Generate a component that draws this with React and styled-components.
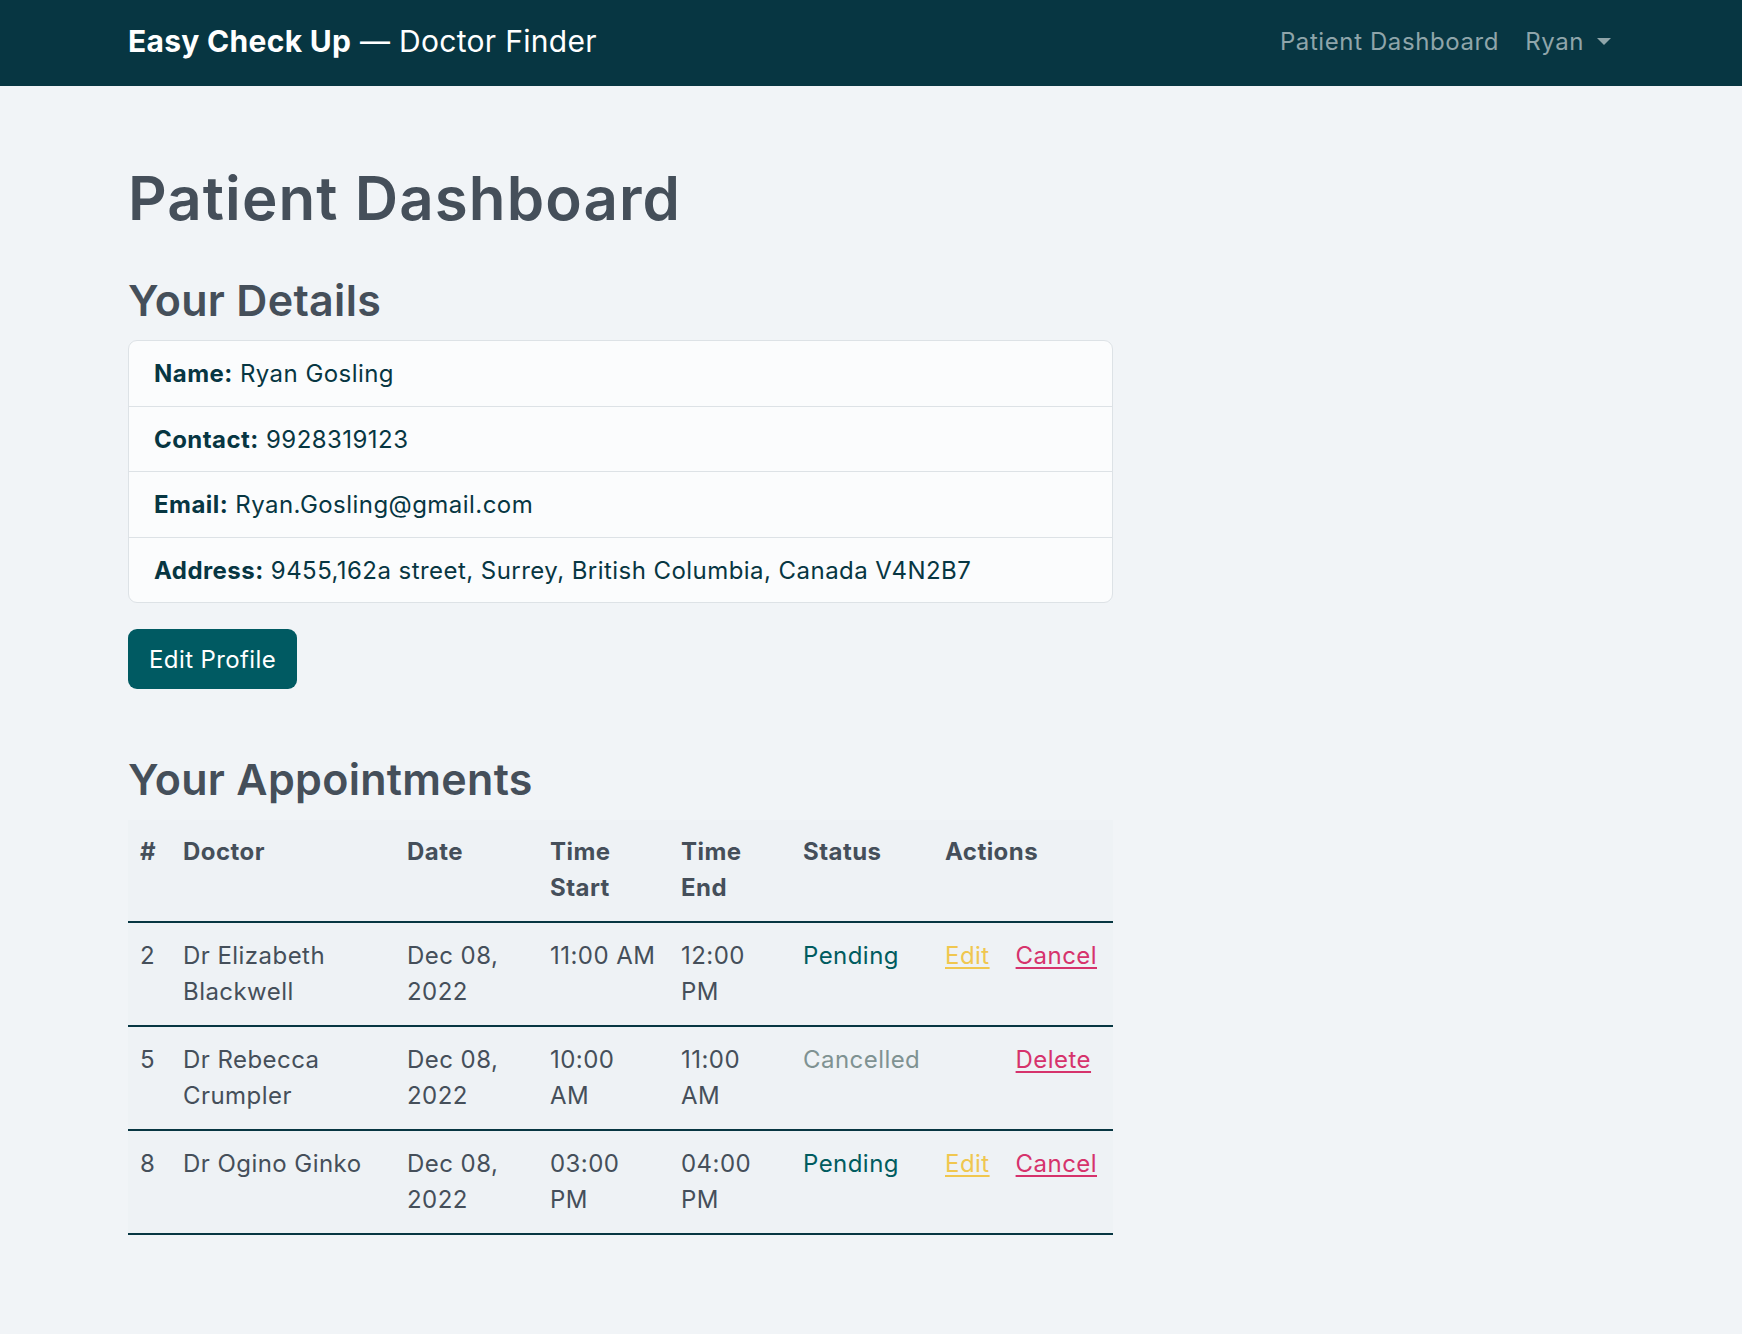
import React from "react";
import styled, { createGlobalStyle } from "styled-components";

const GlobalStyle = createGlobalStyle`
  * { box-sizing: border-box; }
  body {
    margin: 0;
    background: #f1f4f7;
    font-family: Inter, "Noto Sans", "Liberation Sans", sans-serif;
    color: #454f5a;
    font-size: 24px;
    line-height: 1.5;
    letter-spacing: 0.45px;
  }
`;

const Navbar = styled.nav`
  height: 86px;
  background: #073642;
  display: flex;
  align-items: center;
  justify-content: space-between;
  padding: 0 131px 3px 128px;
`;

const Brand = styled.div`
  color: #fff;
  font-size: 30px;
  font-weight: 400;
  letter-spacing: 0.3px;

  strong {
    font-weight: 700;
  }
`;

const NavLinks = styled.div`
  display: flex;
  align-items: center;
  gap: 26px;
`;

const NavLink = styled.a`
  color: #8fa5aa;
  font-size: 24px;
  letter-spacing: 0.6px;
  text-decoration: none;

  ${({ $dropdown }) =>
    $dropdown &&
    `
    &::after {
      content: "";
      display: inline-block;
      margin-left: 13px;
      vertical-align: 5px;
      border-top: 7px solid #8fa5aa;
      border-left: 7px solid transparent;
      border-right: 7px solid transparent;
    }
  `}
`;

const Main = styled.main`
  padding: 76px 128px 0;
`;

const PageTitle = styled.h1`
  margin: 0;
  font-size: 60px;
  line-height: 72px;
  font-weight: 600;
  color: #454f5a;
  letter-spacing: 1.1px;
`;

const SectionTitle = styled.h2`
  margin: ${({ $top }) => $top}px 0 0;
  font-size: 43px;
  line-height: 53px;
  font-weight: 600;
  color: #454f5a;
  letter-spacing: 0.3px;
`;

const DetailsCard = styled.ul`
  list-style: none;
  margin: 13px 0 0;
  padding: 0;
  width: 985px;
  background: #fbfcfd;
  border: 1px solid #dde2e6;
  border-radius: 9px;
  overflow: hidden;
`;

const DetailRow = styled.li`
  padding: 15px 25px 14.5px;
  line-height: 35px;
  color: #073642;
  border-top: ${({ $first }) => ($first ? "none" : "1px solid #dde2e6")};

  b {
    font-weight: 700;
  }
`;

const PrimaryButton = styled.button`
  margin-top: 26px;
  height: 60px;
  padding: 0 21px;
  background: #005a62;
  color: #fff;
  border: none;
  border-radius: 9px;
  font-family: inherit;
  font-size: 24px;
  letter-spacing: 0.4px;
`;

const Table = styled.table`
  margin-top: 14px;
  width: 985px;
  border-collapse: collapse;
  background: #eef2f5;
  table-layout: fixed;
`;

const Th = styled.th`
  width: ${({ $w }) => $w}px;
  text-align: left;
  vertical-align: top;
  padding: 14px 12px 15px;
  font-weight: 700;
  line-height: 36px;
  color: #454f5a;
  border-bottom: 2px solid #073642;
`;

const Td = styled.td`
  vertical-align: top;
  padding: 15px 12px;
  line-height: 36px;
  color: #454f5a;
  border-bottom: 2px solid #073642;
`;

const Status = styled.span`
  color: ${({ $cancelled }) => ($cancelled ? "#7f9292" : "#005c5f")};
`;

const Actions = styled.div`
  display: flex;
  gap: 26px;
`;

const ActionLink = styled.a`
  color: ${({ $tone }) => ($tone === "edit" ? "#f0c74f" : "#d6336c")};
  text-decoration: underline;
  text-decoration-thickness: 2px;
  text-underline-offset: 3px;
  visibility: ${({ $hidden }) => ($hidden ? "hidden" : "visible")};
`;

const appointments = [
  { id: 2, doctor: "Dr Elizabeth Blackwell", date: "Dec 08, 2022", start: "11:00 AM", end: "12:00 PM", status: "Pending" },
  { id: 5, doctor: "Dr Rebecca Crumpler", date: "Dec 08, 2022", start: "10:00 AM", end: "11:00 AM", status: "Cancelled" },
  { id: 8, doctor: "Dr Ogino Ginko", date: "Dec 08, 2022", start: "03:00 PM", end: "04:00 PM", status: "Pending" },
];

const columns = [
  ["#", 43],
  ["Doctor", 224],
  ["Date", 143],
  ["Time Start", 131],
  ["Time End", 122],
  ["Status", 142],
  ["Actions", 180],
];

export default function App() {
  return (
    <>
      <GlobalStyle />
      <Navbar>
        <Brand>
          <strong>Easy Check Up</strong> — Doctor Finder
        </Brand>
        <NavLinks>
          <NavLink href="#">Patient Dashboard</NavLink>
          <NavLink href="#" $dropdown>
            Ryan
          </NavLink>
        </NavLinks>
      </Navbar>
      <Main>
        <PageTitle>Patient Dashboard</PageTitle>
        <SectionTitle $top={40}>Your Details</SectionTitle>
        <DetailsCard>
          <DetailRow $first>
            <b>Name:</b> Ryan Gosling
          </DetailRow>
          <DetailRow>
            <b>Contact:</b> 9928319123
          </DetailRow>
          <DetailRow>
            <b>Email:</b> Ryan.Gosling@gmail.com
          </DetailRow>
          <DetailRow>
            <b>Address:</b> 9455,162a street, Surrey, British Columbia, Canada V4N2B7
          </DetailRow>
        </DetailsCard>
        <PrimaryButton>Edit Profile</PrimaryButton>
        <SectionTitle $top={64}>Your Appointments</SectionTitle>
        <Table>
          <thead>
            <tr>
              {columns.map(([label, w]) => (
                <Th key={label} $w={w}>
                  {label}
                </Th>
              ))}
            </tr>
          </thead>
          <tbody>
            {appointments.map((a) => {
              const cancelled = a.status === "Cancelled";
              return (
                <tr key={a.id}>
                  <Td>{a.id}</Td>
                  <Td>{a.doctor}</Td>
                  <Td>{a.date}</Td>
                  <Td>{a.start}</Td>
                  <Td>{a.end}</Td>
                  <Td>
                    <Status $cancelled={cancelled}>{a.status}</Status>
                  </Td>
                  <Td>
                    <Actions>
                      <ActionLink href="#" $tone="edit" $hidden={cancelled}>
                        Edit
                      </ActionLink>
                      <ActionLink href="#">{cancelled ? "Delete" : "Cancel"}</ActionLink>
                    </Actions>
                  </Td>
                </tr>
              );
            })}
          </tbody>
        </Table>
      </Main>
    </>
  );
}
